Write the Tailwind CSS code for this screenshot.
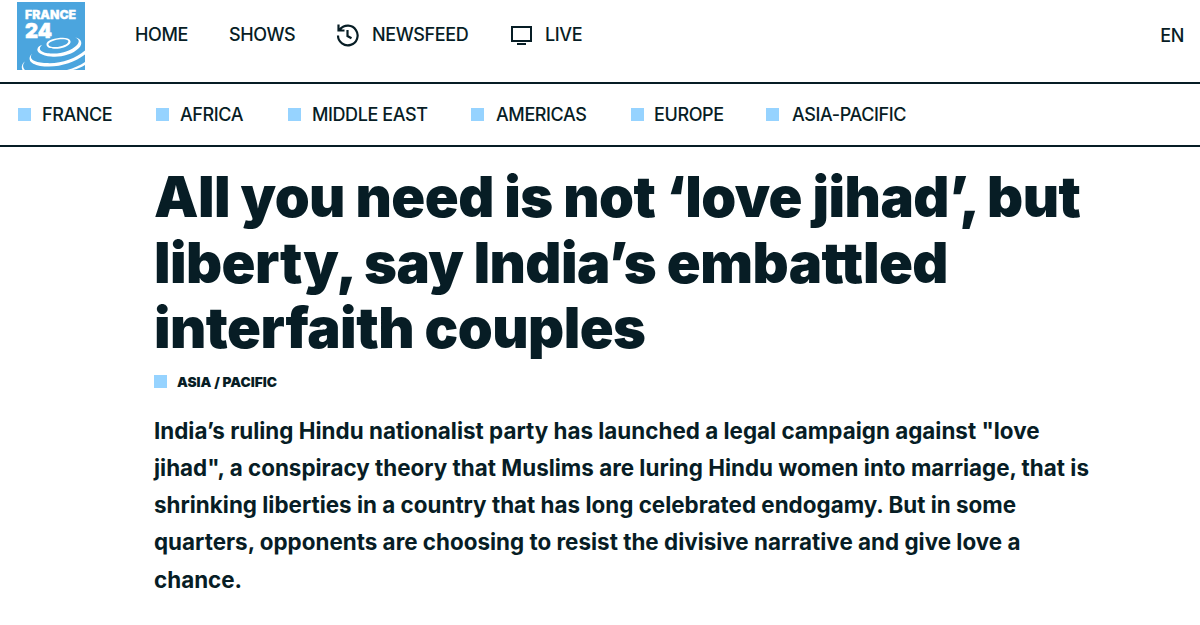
<!DOCTYPE html>
<html lang="en">
<head>
    <meta charset="utf-8">
    <meta name="viewport" content="width=device-width, initial-scale=1.0">
    <title>France 24</title>
    <script src="https://cdn.jsdelivr.net/npm/@tailwindcss/browser@4"></script>
</head>
<body class="bg-white text-[#071d25] font-['Inter',sans-serif] h-[625px] overflow-hidden">
    <!-- top bar -->
    <header class="flex h-[82px] pl-[17px] pr-4">
        <svg class="mt-[2px] w-[68px] h-[68px] shrink-0" viewBox="0 0 68 68">
            <rect width="68" height="68" fill="#4ba5de"/>
            <text x="8" y="17.3" font-size="11.5" font-weight="900" fill="#fff" stroke="#fff" stroke-width=".3" textLength="51" lengthAdjust="spacingAndGlyphs">FRANCE</text>
            <text x="8" y="35.7" font-size="20.5" font-weight="900" fill="#fff" stroke="#fff" stroke-width=".5" textLength="27" lengthAdjust="spacingAndGlyphs">24</text>
            <!-- ripples -->
            <g fill="#fff" fill-rule="evenodd">
                <path d="M29.500 43C28.500 38 39 35.700 46 35.700C52 35.700 55 38.500 53 41.500C50 45.500 43 47 37 46.700C33 46.500 30 45.500 29.500 43ZM31.500 42.800C32 45.500 39 45.600 44 44.200C49 43 52.500 40.500 51 38.500C49 36.700 42 37 38 38.200C34 39.200 31 41.200 31.500 42.800Z"/>
                <path d="M58 35.500C65 36.500 66 42 62 46C55 53 43 55.500 34 54.500C25 54 18 50 21 45.500C22 44 24 43 25 43C19 48.500 27 51.500 35 51.500C44 52 55 48.500 60 43C63 39.500 62 37 58 35.500Z"/>
                <path d="M15 51.500C11 58 19 60.500 29 61C43 62 58 57 68 48.500V52.500C58 60 44 65 30 64.500C17 64.500 8 59 15 51.500Z"/>
                <path d="M8 59.500C5 63 6 66 8 68H5.500C4 65 5 61.500 8 59.500ZM50 68C57 66 63 63.500 68 60V63C64 65.500 60 67 56 68Z"/>
            </g>
        </svg>
        <nav class="flex items-center h-[69px] text-lg leading-6 font-medium tracking-[-0.4px] ml-[50px]">
            <a class="w-[94px]">HOME</a>
            <a class="w-[107px]">SHOWS</a>
            <a class="flex items-center w-[174px]">
                <svg class="w-6 h-6 mr-3" viewBox="0 0 24 24" fill="none" stroke="currentColor" stroke-width="2.2"><path d="M2 12.500A9.800 9.800 0 1 0 4.200 6.300M2.500 1.500V7.500H8.500M2.500 7.500L5.500 4.800M11.500 7V13L15.500 15.200"/></svg>
                NEWSFEED
            </a>
            <a class="flex items-center">
                <svg class="w-6 h-6 mr-[11px]" viewBox="0 0 24 24" fill="none" stroke="currentColor" stroke-width="2"><path d="M2 4h19v14H2zM7 21h9"/></svg>
                LIVE
            </a>
        </nav>
        <a class="ml-auto mt-[24px] text-lg leading-6 font-medium tracking-[-0.4px]">EN</a>
    </header>
    <!-- sections -->
    <nav class="flex items-center h-[65px] border-y-2 border-[#071d25] text-lg font-medium tracking-[-0.4px] pl-[18px]">
        <a class="flex items-center w-[138px]"><i class="w-[13px] h-[13px] bg-[#96d3ff] mr-[11px]"></i>FRANCE</a>
        <a class="flex items-center w-[132px]"><i class="w-[13px] h-[13px] bg-[#96d3ff] mr-[11px]"></i>AFRICA</a>
        <a class="flex items-center w-[183px]"><i class="w-[13px] h-[13px] bg-[#96d3ff] mr-[11px]"></i>MIDDLE EAST</a>
        <a class="flex items-center w-[160px]"><i class="w-[13px] h-[13px] bg-[#96d3ff] mr-3"></i>AMERICAS</a>
        <a class="flex items-center w-[135px]"><i class="w-[13px] h-[13px] bg-[#96d3ff] mr-[10px]"></i>EUROPE</a>
        <a class="flex items-center"><i class="w-[13px] h-[13px] bg-[#96d3ff] mr-[13px]"></i>ASIA-PACIFIC</a>
    </nav>
    <main class="pl-[154px] pt-[18px]">
        <h1 class="text-[56px] leading-[65.6px] font-black tracking-[-0.56px] whitespace-nowrap">All you need is not ‘love jihad’, but<br>liberty, say India’s embattled<br>interfaith couples</h1>
        <div class="flex items-center h-5 mt-[10px] text-[13.7px] font-black"><i class="w-[13px] h-[13px] bg-[#96d3ff] mr-[10px]"></i>ASIA / PACIFIC</div>
        <p class="mt-5 text-[22.42px] leading-[37.2px] font-bold whitespace-nowrap">India’s ruling Hindu nationalist party has launched a legal campaign against "love<br>jihad", a conspiracy theory that Muslims are luring Hindu women into marriage, that is<br>shrinking liberties in a country that has long celebrated endogamy. But in some<br>quarters, opponents are choosing to resist the divisive narrative and give love a<br>chance.</p>
    </main>
</body>
</html>
